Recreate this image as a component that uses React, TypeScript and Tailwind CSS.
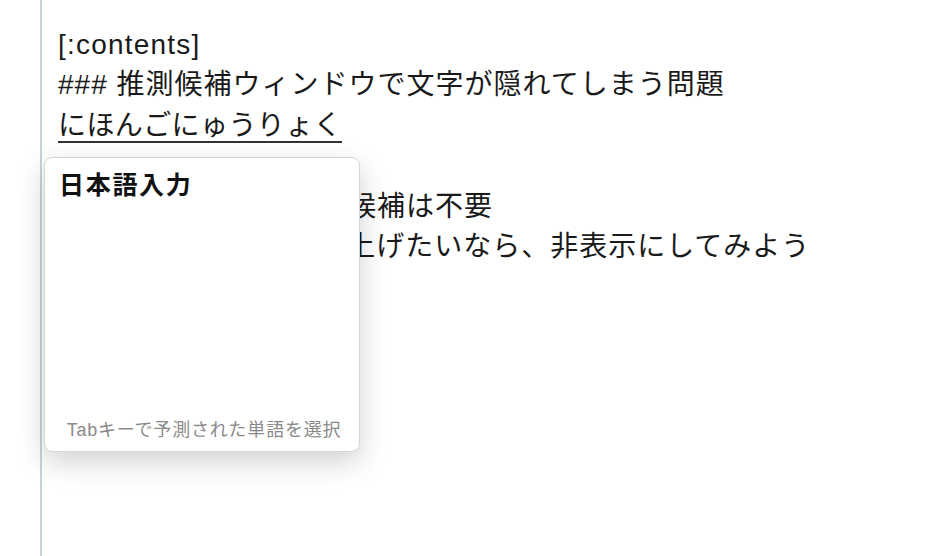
export default function App() {
  const font = { fontFamily: '"Liberation Sans", "Noto Sans CJK JP", sans-serif' };
  return (
    <div className="w-[938px] h-[556px] bg-white overflow-hidden flex" style={font}>
      <div className="w-[40px] shrink-0" />
      <div className="w-[2px] shrink-0 bg-[#c9d3d8]" />
      <div className="relative flex-1 pl-[16px] pt-[25px] text-[28px] leading-[40.4px] text-[#1a1a1a]">
        <div className="tracking-[1.2px]">[:contents]</div>
        <div className="tracking-[1px] whitespace-nowrap">### 推測候補ウィンドウで文字が隠れてしまう問題</div>
        <div className="tracking-[0.4px]"><span className="underline decoration-[2px] underline-offset-[6px] decoration-[#333]">にほんごにゅうりょく</span></div>
        <div>&nbsp;</div>
        <div className="tracking-[1px] whitespace-nowrap">ライブ変換派なら推測候補は不要</div>
        <div className="tracking-[1px] whitespace-nowrap">入力の速度を少しでも上げたいなら、非表示にしてみよう</div>

        <div className="absolute left-[2px] top-[157px] w-[316px] h-[295px] bg-white rounded-[8px] border border-[#d4d4d4] shadow-[0_10px_28px_rgba(0,0,0,0.18)] flex flex-col justify-between pl-[14px] pr-[12px] pt-[8px] pb-[8px]">
          <div className="text-[25px] font-bold leading-[34px] text-[#111] tracking-[1.7px]" style={{ fontFamily: '"Noto Sans CJK JP", sans-serif' }}>日本語入力</div>
          <div className="text-[18px] leading-[26px] text-[#8a8a8a] text-center tracking-[0.8px] whitespace-nowrap pl-[2px]">Tabキーで予測された単語を選択</div>
        </div>
      </div>
    </div>
  );
}
